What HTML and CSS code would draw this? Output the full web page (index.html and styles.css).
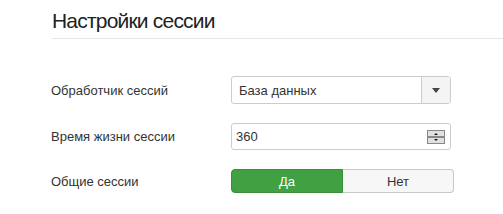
FILE: index.html
```html
<!DOCTYPE html>
<html>
<head>
<meta charset="utf-8">
<link rel="stylesheet" href="styles.css">
</head>
<body>
<div class="page">
  <h2 class="title">Настройки сессии</h2>
  <div class="form">
    <div class="row">
      <label class="label">Обработчик сессий</label>
      <div class="select">
        <span class="select-text">База данных</span>
        <span class="select-arrow"><svg width="8" height="5" viewBox="0 0 8 5"><path d="M0 0H8L4 5Z" fill="#444"/></svg></span>
      </div>
    </div>
    <div class="row">
      <label class="label">Время жизни сессии</label>
      <div class="input">
        <span class="input-text">360</span>
        <span class="spinner">
          <svg width="18" height="14" viewBox="0 0 18 14">
            <rect x="0.5" y="0.5" width="17" height="6" fill="#e0e0e0" stroke="#888"/>
            <rect x="0.5" y="7.5" width="17" height="6" fill="#e0e0e0" stroke="#888"/>
            <path d="M7 5H11L9 3Z" fill="#111"/>
            <path d="M7 9H11L9 11Z" fill="#111"/>
          </svg>
        </span>
      </div>
    </div>
    <div class="row">
      <label class="label">Общие сессии</label>
      <div class="toggle">
        <span class="btn btn-yes">Да</span>
        <span class="btn btn-no">Нет</span>
      </div>
    </div>
  </div>
</div>
</body>
</html>
```
FILE: styles.css
```css
html, body {
  margin: 0;
  padding: 0;
  background: #fff;
}
.page {
  padding: 9px 0 0 52px;
  font-family: "Liberation Sans", Arial, sans-serif;
  color: #333;
}
.title {
  margin: 0;
  font-size: 21px;
  letter-spacing: -0.8px;
  font-weight: normal;
  line-height: 24px;
  color: #222;
  padding-bottom: 5px;
  border-bottom: 1px solid #e5e5e5;
}
.form {
  padding-top: 37px;
  display: flex;
  flex-direction: column;
  gap: 19px;
}
.row {
  display: grid;
  grid-template-columns: 179px auto;
  align-items: center;
}
.label {
  font-size: 13px;
  color: #333;
  margin-left: -1px;
}
.select {
  width: 220px;
  height: 28px;
  box-sizing: border-box;
  border: 1px solid #ccc;
  border-radius: 3px;
  display: flex;
  align-items: stretch;
  background: #fff;
}
.select-text {
  flex: 1;
  display: flex;
  align-items: center;
  padding-left: 7px;
  font-size: 13px;
  color: #333;
}
.select-arrow {
  width: 28px;
  border-left: 1px solid #ccc;
  background: #f4f4f4;
  display: flex;
  align-items: center;
  justify-content: center;
}
.input {
  width: 220px;
  height: 27px;
  box-sizing: border-box;
  border: 1px solid #ccc;
  border-radius: 3px;
  display: flex;
  align-items: center;
  justify-content: space-between;
  padding: 0 5px 0 4px;
}
.input-text {
  font-size: 13px;
  color: #333;
}
.spinner {
  display: flex;
}
.toggle {
  width: 223px;
  height: 24px;
  display: flex;
  font-size: 13px;
}
.btn {
  box-sizing: border-box;
  display: flex;
  align-items: center;
  justify-content: center;
}
.btn-yes {
  width: 112px;
  background: #41a041;
  color: #fff;
  border: 1px solid #3a8e3a;
  border-radius: 4px 0 0 4px;
}
.btn-no {
  flex: 1;
  background: #f7f7f7;
  color: #333;
  border: 1px solid #c8c8c8;
  border-left: none;
  border-radius: 0 4px 4px 0;
}
```
